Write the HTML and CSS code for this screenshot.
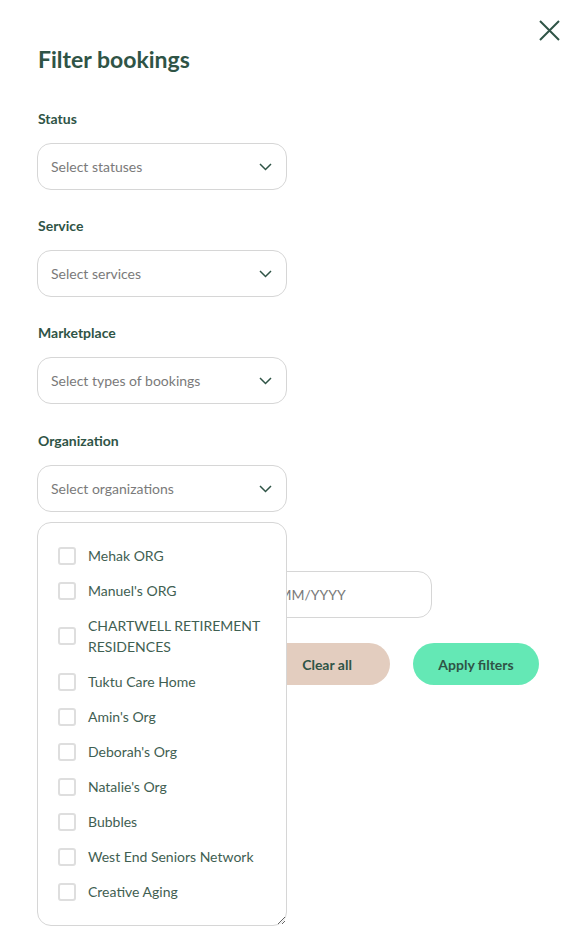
FILE: index.html
```html
<!DOCTYPE html>
<html lang="en">
<head>
  <meta charset="UTF-8" />
  <title>Filter bookings</title>
  <meta name="viewport" content="width=device-width, initial-scale=1.0" />
  <link rel="stylesheet" href="styles.css">
</head>
<body>
  <div class="panel">
    <div class="panel-head">
      <h1>Filter bookings</h1>
      <button class="close-btn" aria-label="Close">
        <svg width="21" height="21" viewBox="0 0 21 21"><path d="M1 1L20 20M20 1L1 20" stroke="#2f5446" stroke-width="2" fill="none"/></svg>
      </button>
    </div>

    <div class="field">
      <label>Status</label>
      <div class="select"><span>Select statuses</span><svg class="chev" width="13" height="8" viewBox="0 0 13 8"><path d="M1 1l5.5 5.5L12 1" stroke="#2f5446" stroke-width="1.5" fill="none"/></svg></div>
    </div>

    <div class="field">
      <label>Service</label>
      <div class="select"><span>Select services</span><svg class="chev" width="13" height="8" viewBox="0 0 13 8"><path d="M1 1l5.5 5.5L12 1" stroke="#2f5446" stroke-width="1.5" fill="none"/></svg></div>
    </div>

    <div class="field">
      <label>Marketplace</label>
      <div class="select"><span>Select types of bookings</span><svg class="chev" width="13" height="8" viewBox="0 0 13 8"><path d="M1 1l5.5 5.5L12 1" stroke="#2f5446" stroke-width="1.5" fill="none"/></svg></div>
    </div>

    <div class="field org-field">
      <label>Organization</label>
      <div class="select"><span>Select organizations</span><svg class="chev" width="13" height="8" viewBox="0 0 13 8"><path d="M1 1l5.5 5.5L12 1" stroke="#2f5446" stroke-width="1.5" fill="none"/></svg></div>

      <ul class="org-list">
        <li><span class="box"></span><span>Mehak ORG</span></li>
        <li><span class="box"></span><span>Manuel's ORG</span></li>
        <li><span class="box"></span><span>CHARTWELL RETIREMENT RESIDENCES</span></li>
        <li><span class="box"></span><span>Tuktu Care Home</span></li>
        <li><span class="box"></span><span>Amin's Org</span></li>
        <li><span class="box"></span><span>Deborah's Org</span></li>
        <li><span class="box"></span><span>Natalie's Org</span></li>
        <li><span class="box"></span><span>Bubbles</span></li>
        <li><span class="box"></span><span>West End Seniors Network</span></li>
        <li><span class="box"></span><span>Creative Aging</span></li>
      </ul>
    </div>

    <div class="field date-field">
      <label>Date</label>
      <div class="date-input"><span>DD/MM/YYYY</span></div>
    </div>

    <div class="actions">
      <button class="btn btn-clear">Clear all</button>
      <button class="btn btn-apply">Apply filters</button>
    </div>
  </div>
</body>
</html>
```

FILE: styles.css
```css
body {
  font-family: Lato, 'Open Sans', sans-serif;
  margin: 0;
  padding: 0;
  background-color: #fff;
  color: #2f5446;
}
.panel {
  min-height: 100vh;
  box-sizing: border-box;
  padding: 0 35px 0 37px;
}
.panel-head {
  display: flex;
  justify-content: space-between;
  align-items: flex-start;
  padding-top: 20px;
}
.panel-head h1 {
  margin: 24px 0 0 1px;
  font-size: 23px;
  line-height: 30px;
  font-weight: 700;
  color: #2f5446;
}
.close-btn {
  background: none;
  border: none;
  padding: 0;
  margin-right: -21px;
  cursor: pointer;
  display: flex;
}
.field {
  margin-top: 36px;
}
.field + .field {
  margin-top: 27px;
}
.field label {
  display: block;
  font-size: 14px;
  line-height: 18px;
  font-weight: 700;
  margin-left: 1px;
  margin-bottom: 15px;
}
.org-field {
  position: relative;
  margin-top: 28px !important;
}
.date-field {
  margin-top: 26px !important;
}
.select {
  width: 250px;
  height: 47px;
  box-sizing: border-box;
  border: 1px solid #d6d6d6;
  border-radius: 14px;
  display: flex;
  align-items: center;
  justify-content: space-between;
  padding: 0 14px 0 13px;
  font-size: 14px;
  color: #7a7a7a;
}
.org-list {
  position: absolute;
  top: calc(100% + 10px);
  left: 0;
  z-index: 10;
  width: 250px;
  height: 404px;
  box-sizing: border-box;
  margin: 0;
  padding: 15px 20px 14px 20px;
  list-style: none;
  background-color: #fff;
  border: 1px solid #d6d6d6;
  border-radius: 14px;
  overflow: auto;
  resize: vertical;
}
.org-list li {
  display: flex;
  align-items: center;
  gap: 12px;
  padding: 7px 0;
  font-size: 14px;
  line-height: 21px;
  color: #3f6052;
}
.org-list .box {
  flex: none;
  width: 18px;
  height: 18px;
  box-sizing: border-box;
  border: 2px solid #dedede;
  border-radius: 3px;
}
.date-input {
  width: 395px;
  height: 47px;
  box-sizing: border-box;
  border: 1px solid #d6d6d6;
  border-radius: 14px;
  display: flex;
  align-items: center;
  padding-left: 213px;
  font-size: 14px;
  color: #7a7a7a;
}
.actions {
  display: flex;
  justify-content: flex-end;
  gap: 23px;
  margin-top: 25px;
}
.btn {
  width: 126px;
  height: 42px;
  border: none;
  border-radius: 21px;
  font-family: Lato, 'Open Sans', sans-serif;
  font-size: 14px;
  font-weight: 700;
  color: #2f5446;
  cursor: pointer;
}
.btn-clear {
  background-color: #e3cdbf;
}
.btn-apply {
  background-color: #64e8b5;
}
```
